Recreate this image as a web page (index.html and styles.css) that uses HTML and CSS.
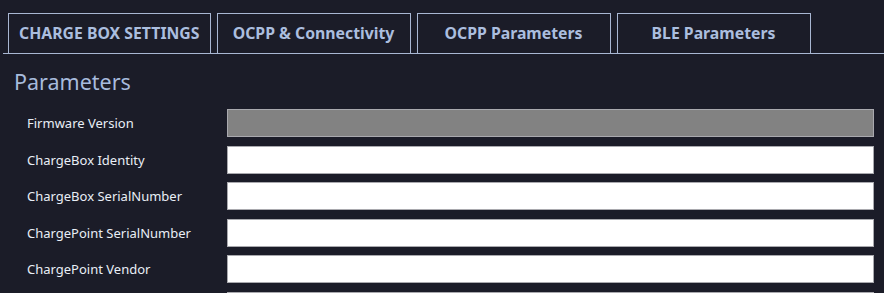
FILE: index.html
```html
<!DOCTYPE html>
<html lang="en">
<head>
  <meta charset="UTF-8" />
  <title>OCPP Parameters</title>
  <link rel="stylesheet" href="styles.css">
</head>
<body>
  <div class="tabs">
    <div class="tab">CHARGE BOX SETTINGS</div>
    <div class="tab">OCPP &amp; Connectivity</div>
    <div class="tab active">OCPP Parameters</div>
    <div class="tab">BLE Parameters</div>
  </div>

  <h2 class="title">Parameters</h2>

  <div class="params">
    <label>Firmware Version</label>
    <input type="text" class="readonly" readonly />

    <label>ChargeBox Identity</label>
    <input type="text" />

    <label>ChargeBox SerialNumber</label>
    <input type="text" />

    <label>ChargePoint SerialNumber</label>
    <input type="text" />

    <label>ChargePoint Vendor</label>
    <input type="text" />

    <label></label>
    <input type="text" />
  </div>
</body>
</html>
```

FILE: styles.css
```css
body {
  margin: 0;
  background-color: #1b1c28;
  font-family: "Noto Sans", "Open Sans", sans-serif;
  overflow: hidden;
}
.tabs {
  display: flex;
  gap: 6px;
  margin-left: 3px;
  padding: 13px 0 0 5px;
  border-bottom: 1px solid #a9b7d3;
}
.tab {
  min-width: 194px;
  box-sizing: border-box;
  height: 40px;
  padding: 0 10px;
  border: 1px solid #a9b7d3;
  border-bottom: none;
  color: #abbedf;
  font-size: 15.8px;
  font-weight: bold;
  line-height: 39px;
  text-align: center;
  white-space: nowrap;
}
.tab.active {
  margin-bottom: -1px;
  background-color: #1b1c28;
}
.title {
  margin: 13px 0 0 14px;
  color: #a7bbdd;
  font-size: 21.5px;
  font-weight: normal;
  line-height: 30px;
}
.params {
  display: grid;
  grid-template-columns: 200px 1fr;
  row-gap: 8.6px;
  align-items: center;
  padding: 12px 10px 0 27px;
}
label {
  color: #e9eef6;
  font-size: 13px;
}
input {
  height: 28px;
  box-sizing: border-box;
  border: 1px solid #a9a9ae;
  border-radius: 0;
  background-color: #fff;
  margin: 0;
}
input.readonly {
  background-color: #828282;
}
```
